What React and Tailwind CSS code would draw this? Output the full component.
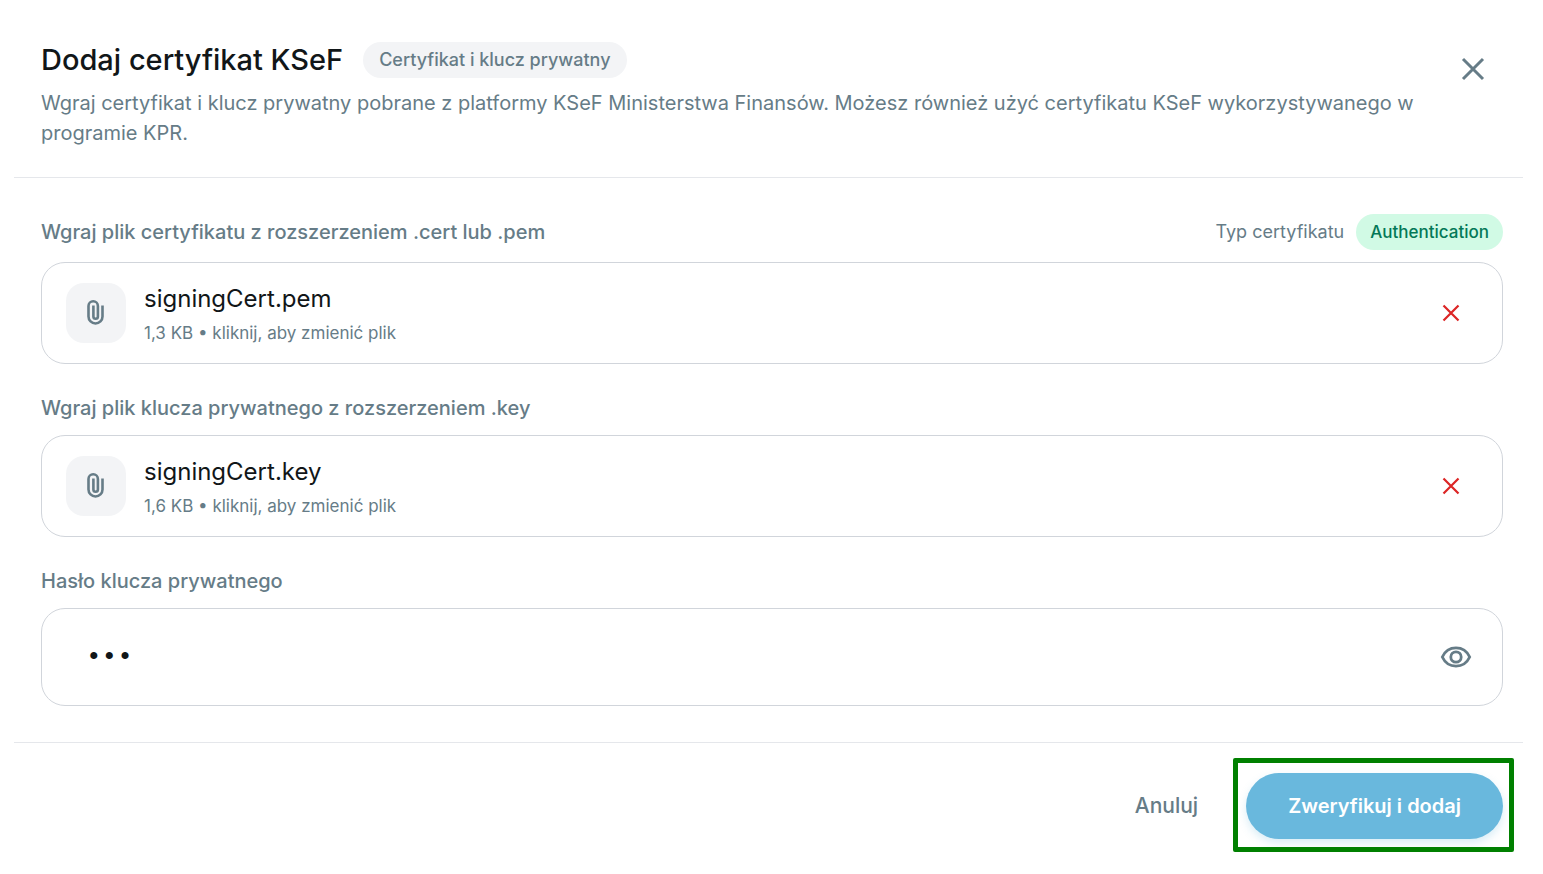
import { useState } from "react";

function CloseIcon({ className }) {
  return (
    <svg viewBox="0 0 24 24" fill="none" stroke="currentColor" strokeWidth="3" className={className} aria-hidden="true">
      <path d="M2 2l20 20M22 2L2 22" />
    </svg>
  );
}

function ClipIcon() {
  return (
    <svg viewBox="0 0 30 30" fill="none" stroke="currentColor" strokeWidth="2.6" className="size-[30px]" aria-hidden="true">
      <path d="M21.500 7.500V18.500a7 7 0 0 1-14 0V8a4.700 4.700 0 0 1 9.400 0V18.500a2.200 2.200 0 0 1-4.500 0V7.500" />
    </svg>
  );
}

function EyeIcon() {
  return (
    <svg viewBox="0 0 32 24" fill="none" stroke="currentColor" strokeWidth="2.8" className="h-6 w-8" aria-hidden="true">
      <path d="M2.3 12C5 6.200 10 2.900 16 2.900S27 6.200 29.700 12C27 17.800 22 21.100 16 21.100S5 17.800 2.300 12z" />
      <circle cx="16" cy="12" r="5.200" />
    </svg>
  );
}

function FileField({ id, label, name, size, badge, onClear }) {
  return (
    <div>
      <div className="flex items-center justify-between">
        <label htmlFor={id} className="text-[20px] leading-[30px] font-medium">{label}</label>
        {badge}
      </div>
      <div className="flex items-center mt-3 px-6 py-4 rounded-[24px] border border-[#d1d5db] bg-white">
        <button id={id} type="button" className="flex flex-1 items-center gap-[18px] text-left">
          <span className="flex items-center justify-center size-[60px] rounded-[18px] bg-[#f3f4f6]">
            <ClipIcon />
          </span>
          <span>
            <span className="block text-[24px] leading-10 text-[#111618]">{name}</span>
            <span className="block text-[17px] leading-7">{size} • kliknij, aby zmienić plik</span>
          </span>
        </button>
        <button type="button" aria-label="Usuń plik" onClick={onClear} className="p-[18px] text-[#dc2626]">
          <CloseIcon className="size-[18px]" />
        </button>
      </div>
    </div>
  );
}

export default function App() {
  const [password, setPassword] = useState("abc");
  const [visible, setVisible] = useState(false);

  return (
    <div className="min-h-screen bg-white pl-[14px] pr-5 font-['Inter',sans-serif] text-[#667c87]">
      <header className="flex items-start pt-[42px] pb-[29px] pl-[27px] border-b border-[#e5e7eb]">
        <div className="flex-1">
          <div className="flex items-center gap-5">
            <h1 className="text-[29px] leading-9 font-medium text-[#111618]">Dodaj certyfikat KSeF</h1>
            <span className="px-4 rounded-full bg-[#f3f4f6] text-[18px] leading-9 font-medium">
              Certyfikat i klucz prywatny
            </span>
          </div>
          <p className="mt-[10px] text-[20px] leading-[30px]">
            Wgraj certyfikat i klucz prywatny pobrane z platformy KSeF Ministerstwa Finansów. Możesz również użyć
            certyfikatu KSeF wykorzystywanego w programie KPR.
          </p>
        </div>
        <button type="button" aria-label="Zamknij" className="mt-[3px] mr-[26px] p-3">
          <CloseIcon className="size-6" />
        </button>
      </header>

      <form>
        <div className="flex flex-col gap-[29px] pl-[27px] pr-5 py-9 border-b border-[#e5e7eb]">
          <FileField
            id="cert"
            label="Wgraj plik certyfikatu z rozszerzeniem .cert lub .pem"
            name="signingCert.pem"
            size="1,3 KB"
            badge={
              <div className="flex items-center gap-3 text-[18px] leading-9">
                <span>Typ certyfikatu</span>
                <span className="px-[14px] rounded-full bg-[#d1fae5] text-[17px] font-medium text-[#047857]">
                  Authentication
                </span>
              </div>
            }
          />
          <FileField
            id="key"
            label="Wgraj plik klucza prywatnego z rozszerzeniem .key"
            name="signingCert.key"
            size="1,6 KB"
          />
          <div>
            <label htmlFor="password" className="block text-[20px] leading-[30px] font-medium">
              Hasło klucza prywatnego
            </label>
            <div className="flex items-center mt-3 h-[98px] pl-[44px] pr-[30px] rounded-[24px] border border-[#d1d5db]">
              <input
                id="password"
                type={visible ? "text" : "password"}
                value={password}
                onChange={(e) => setPassword(e.target.value)}
                className="flex-1 bg-transparent outline-none font-['Liberation_Mono',monospace] text-[26px] text-[#111618]"
              />
              <button type="button" aria-label="Pokaż hasło" onClick={() => setVisible(!visible)}>
                <EyeIcon />
              </button>
            </div>
          </div>
        </div>

        <div className="flex items-center justify-end gap-[48px] pt-[30px] pr-5 pb-[34px] text-[20px]">
          <button type="button" className="text-[21px] font-medium">Anuluj</button>
          <div className="relative">
            <button
              type="submit"
              className="h-[66px] px-[42px] rounded-full bg-[#69b8dd] font-semibold text-white shadow-[0_4px_8px_rgba(105,184,221,0.25)]"
            >
              Zweryfikuj i dodaj
            </button>
            <span className="absolute -top-[15px] -right-[11px] -bottom-[13px] -left-[13px] rounded-[2px] border-[5px] border-[#008000] pointer-events-none" />
          </div>
        </div>
      </form>
    </div>
  );
}
